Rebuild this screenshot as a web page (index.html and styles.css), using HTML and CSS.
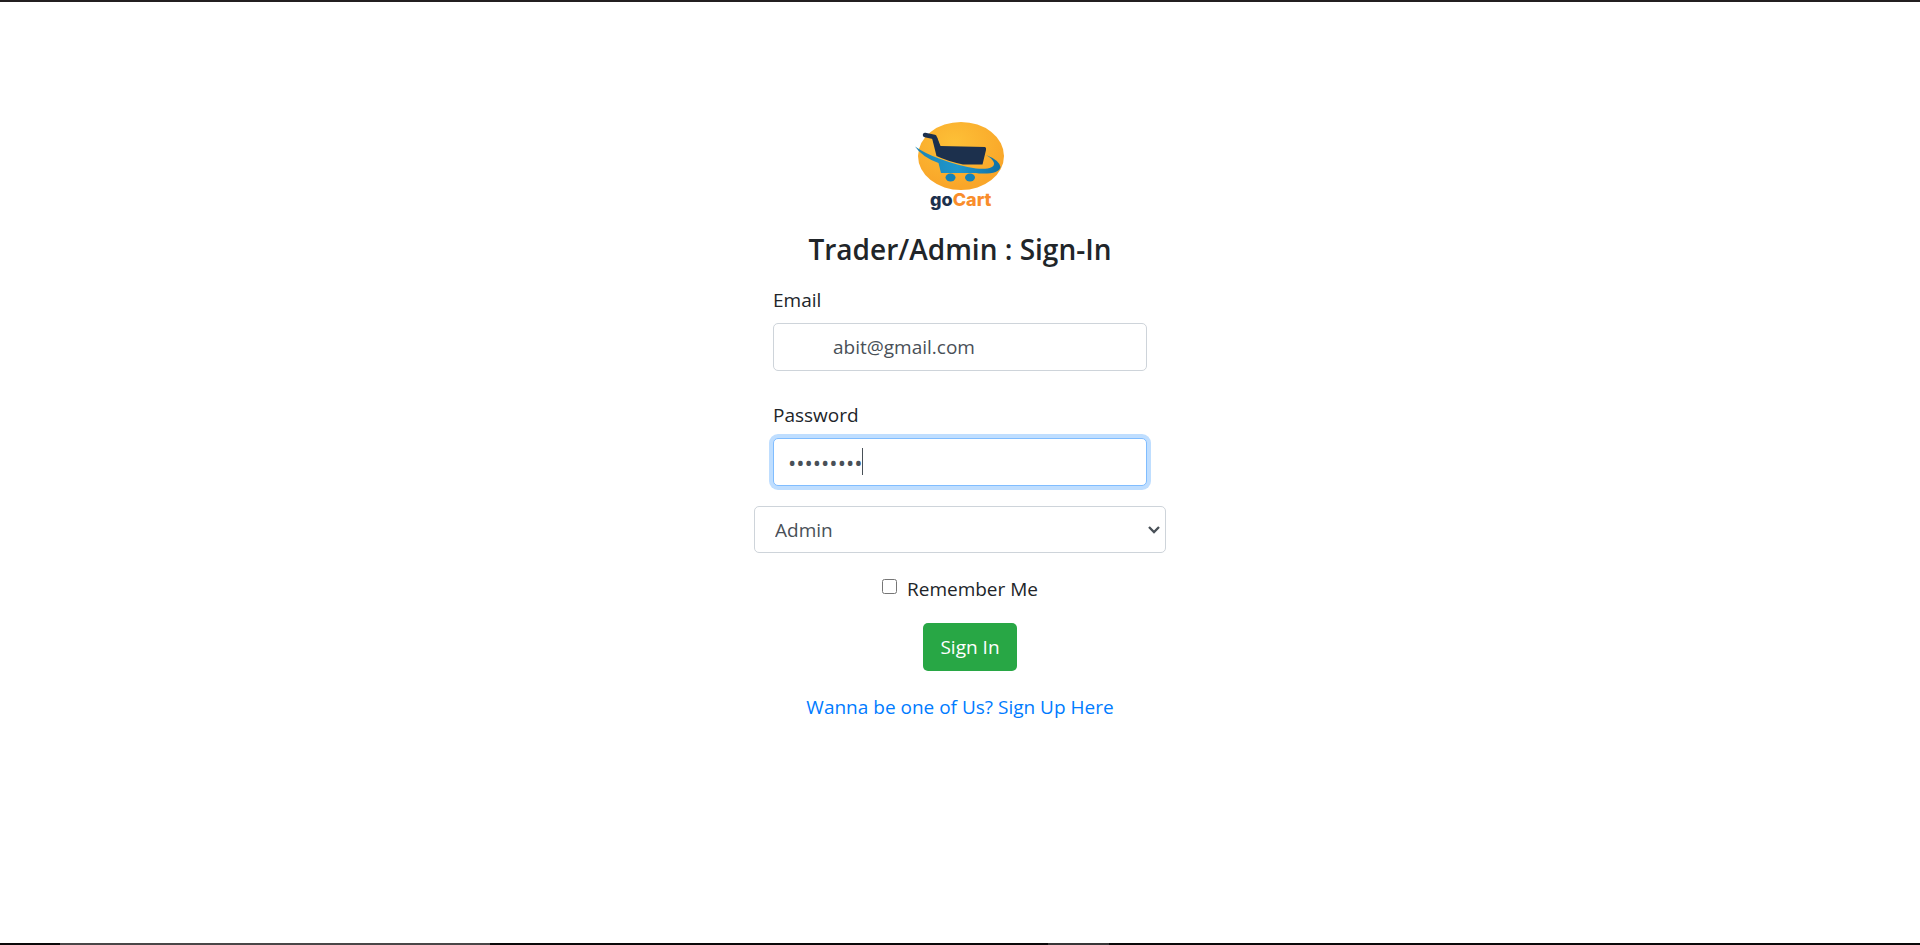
FILE: index.html
```html
<!DOCTYPE html>
<html lang="en">
<head>
<meta charset="utf-8">
<title>goCart Sign-In</title>
<link rel="stylesheet" href="styles.css">
</head>
<body>
<main class="page">
  <form class="signin">
    <svg class="logo" viewBox="0 0 90 92" role="img" aria-label="goCart">
      <defs>
        <radialGradient id="sun" cx="0.42" cy="0.3" r="0.65"><stop offset="0" stop-color="#fdc037"/><stop offset="1" stop-color="#f9a629"/></radialGradient>
        <linearGradient id="swoosh" x1="0" x2="1"><stop offset="0" stop-color="#1c84b4"/><stop offset="0.5" stop-color="#1f97ce"/><stop offset="1" stop-color="#0f70a4"/></linearGradient>
      </defs>
      <ellipse cx="46" cy="36" rx="43" ry="34" fill="url(#sun)"/>
      <path d="M10 15L19.500 17L23 29" fill="none" stroke="#1c304d" stroke-width="4.500" stroke-linecap="round" stroke-linejoin="round"/>
      <path d="M17 18L22 17L25.500 26L70 27Q71.500 27.500 71 30L67.500 44.500H48Q32 41 21.500 36Z" fill="#1c304d"/>
      <path d="M0 26.500Q11 34 24 38.500Q44 46 61 48.500Q80 50 79 43Q77 38 71 35Q84 40 85.500 47Q84 54.500 64 53.500L61 53H26L23.500 43Q7 37 0 26.500Z" fill="url(#swoosh)"/>
      <ellipse cx="35.500" cy="57.500" rx="5" ry="4" fill="#1482b8"/>
      <ellipse cx="55" cy="57.500" rx="5" ry="4" fill="#1482b8"/>
      <text class="logo-text" x="15" y="86"><tspan fill="#1c304d">go</tspan><tspan fill="#f98d2b">Cart</tspan></text>
    </svg>
    <h1 class="title">Trader/Admin : Sign-In</h1>
    <div class="field">
      <label for="email">Email</label>
      <input class="control email" id="email" type="email" value="abit@gmail.com">
    </div>
    <div class="field">
      <label for="password">Password</label>
      <div class="password-box">
        <input class="control password" id="password" type="password" value="gocart123">
        <span class="caret"></span>
      </div>
    </div>
    <div class="role-box">
      <select class="control role" aria-label="Role"><option>Admin</option><option>Trader</option></select>
      <svg class="chevron" viewBox="0 0 12 8"><path d="M1 1L6 6L11 1" fill="none" stroke="#495057" stroke-width="2.300"/></svg>
    </div>
    <div class="remember">
      <input class="check" id="remember" type="checkbox">
      <label for="remember">Remember Me</label>
    </div>
    <button class="submit" type="submit">Sign In</button>
    <a class="signup" href="#">Wanna be one of Us? Sign Up Here</a>
  </form>
</main>
<footer class="taskbar"><span class="task-wide"></span><span class="task-small"></span></footer>
</body>
</html>
```
FILE: styles.css
```css
* { box-sizing: border-box; }
body {
  margin: 0;
  min-height: 100vh;
  display: flex;
  flex-direction: column;
  border-top: 2px solid #231f20;
  background: #fff;
  color: #212529;
  font: 19px/30px "Open Sans", "Noto Sans", sans-serif;
}
.page { flex: 1; padding: 118px 16px 16px; }
.signin {
  display: flex;
  flex-direction: column;
  align-items: center;
  width: 100%;
  max-width: 412px;
  margin: 0 auto;
}
.logo { width: 90px; height: 92px; }
.logo-text { font: 800 18px "Inter", sans-serif; }
.title { margin: 19px 0 18px; font-size: 28px; line-height: 36px; font-weight: 600; white-space: nowrap; }
.field { display: flex; flex-direction: column; gap: 8px; align-self: stretch; margin: 0 19px; }
.field + .field { margin-top: 29px; }
.control {
  width: 100%;
  height: 48px;
  border: 1px solid #ced4da;
  border-radius: 5px;
  background: #fff;
  color: #495057;
  font: inherit;
  outline: none;
}
.email { padding: 0 15px 0 59px; }
.password-box, .role-box { position: relative; }
.password { display: block; padding: 0 14px; border-color: #80bdff; box-shadow: 0 0 0 4px #bfdeff; font-size: 22px; }
.caret { position: absolute; left: 89px; top: 10px; width: 1px; height: 27px; background: #495057; }
.role-box { align-self: stretch; margin-top: 20px; }
.role { display: block; height: 47px; padding: 0 20px; appearance: none; }
.chevron { position: absolute; right: 6px; top: 20px; width: 12px; height: 8px; pointer-events: none; }
.remember { display: flex; align-items: center; gap: 10px; margin: 21px 0 19px; }
.check { width: 15px; height: 15px; margin: 0 0 5px; }
.submit {
  height: 48px;
  margin-left: 20px;
  padding: 0 17px;
  border: 0;
  border-radius: 5px;
  background: #28a745;
  color: #fff;
  font: inherit;
}
.signup { margin-top: 21px; color: #007bff; text-decoration: none; white-space: nowrap; }
.taskbar { display: flex; height: 2px; background: #0b0809; }
.task-wide { width: 430px; margin-left: 60px; background: #4a4647; }
.task-small { width: 61px; margin-left: 558px; background: #383637; }
```
